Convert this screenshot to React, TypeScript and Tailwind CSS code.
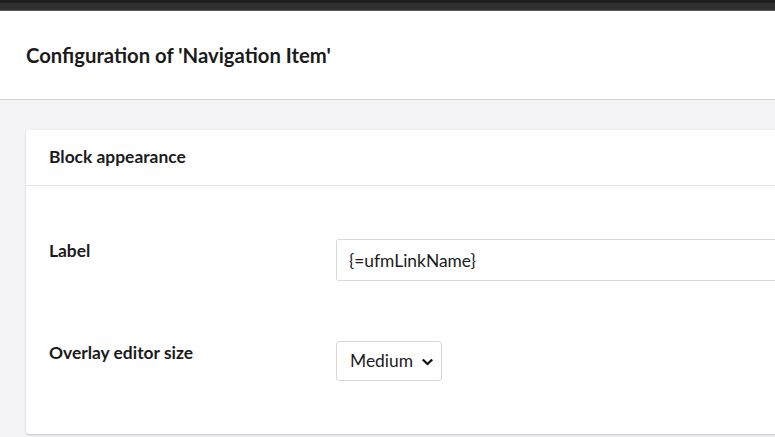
import { ReactNode } from 'react'

function Propiedad({ label, children }: { label: string; children: ReactNode }) {
  return (
    <div className="flex items-start">
      <div className="w-[287px] shrink-0 text-[17.4px] leading-[24px] font-bold text-[#1b1b1b]">{label}</div>
      <div className="flex-1">{children}</div>
    </div>
  )
}

export default function App() {
  return (
    <div className="w-[775px] h-[437px] overflow-hidden bg-[#f3f3f5] font-['Lato','Noto_Sans',sans-serif] text-[#1b1b1b]">
      {/* barra superior */}
      <div className="h-[3px] bg-[#1e1f21]" />
      <div className="h-[7px] bg-[#303030]" />
      <div className="h-px bg-[#5a5a5a]" />

      <div className="h-[89px] bg-white border-b border-[#d8d8da] flex items-center px-[26px]">
        <h1 className="text-[20.3px] font-bold leading-none">Configuration of 'Navigation Item'</h1>
      </div>

      <div className="pt-[30px] pl-[26px]">
        <div className="w-[1000px] h-[304px] bg-white rounded-[3px] shadow-[0_1px_2px_rgba(0,0,0,0.2)]">
          <div className="h-[56px] border-b border-[#e6e6e8] flex items-center px-[23px]">
            <span className="text-[17.4px] font-bold">Block appearance</span>
          </div>
          <div className="pt-[53px] pl-[23px] flex flex-col gap-[60px]">
            <Propiedad label="Label">
              <input
                defaultValue="{=ufmLinkName}"
                className="w-[600px] h-[42px] border border-[#d8d7d9] rounded-[3px] px-[12px] text-[17.4px] text-[#1b1b1b] outline-none"
              />
            </Propiedad>
            <Propiedad label="Overlay editor size">
              <div className="relative w-[106px] h-[40px]">
                <select
                  defaultValue="Medium"
                  className="w-full h-full appearance-none border border-[#d8d7d9] rounded-[3px] pl-[13px] text-[17.4px] text-[#1b1b1b] bg-white outline-none"
                >
                  <option>Small</option>
                  <option>Medium</option>
                  <option>Large</option>
                </select>
                <svg
                  className="absolute right-[8px] top-[17px] pointer-events-none"
                  width="13"
                  height="8"
                  viewBox="0 0 13 8"
                >
                  <path d="M1.8 1.5 L6.5 6 L11.2 1.5" fill="none" stroke="#111" strokeWidth="2.3" />
                </svg>
              </div>
            </Propiedad>
          </div>
        </div>
      </div>
    </div>
  )
}
